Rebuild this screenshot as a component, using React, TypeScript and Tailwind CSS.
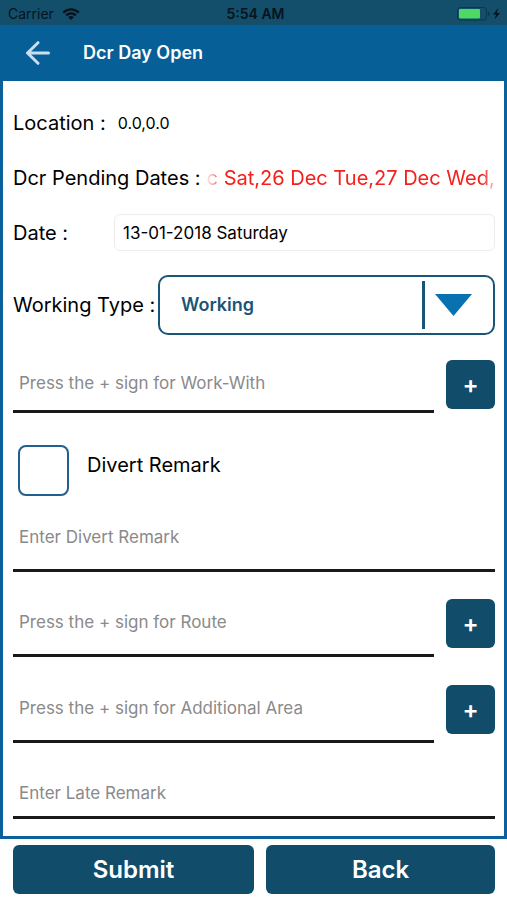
import { useState } from "react";

function StatusBar() {
  return (
    <div className="grid h-[25px] grid-cols-3 items-center bg-[#134e6b] pl-2 pr-1 pt-[2px] text-[14px] text-[#06131c]">
      <div className="flex items-center gap-2">
        <span>Carrier</span>
        <svg width="18" height="12" viewBox="0 0 18 12" fill="none" aria-hidden="true">
          <path d="M1.3 4.6C5.6 0.3 12.4 0.3 16.7 4.6" stroke="currentColor" strokeWidth="2.4" />
          <path d="M4.2 7.4C6.9 4.7 11.1 4.7 13.8 7.4" stroke="currentColor" strokeWidth="2.4" />
          <path d="M9 12L6.2 9.2C7.8 7.7 10.2 7.7 11.8 9.2Z" fill="currentColor" />
        </svg>
      </div>
      <div className="text-center font-semibold">5:54 AM</div>
      <svg className="justify-self-end" width="46" height="14" viewBox="0 0 46 14" aria-hidden="true">
        <rect x="0.5" y="0.5" width="29" height="12.5" rx="3" fill="#134e6b" stroke="#0b3550" />
        <rect x="2" y="2" width="21" height="9.5" rx="1" fill="#4cd964" />
        <path d="M31 4.5C33 5.4 33 8.2 31 9Z" fill="#0b3550" />
        <path d="M41.5 1L36 7.6H39.2L37.5 12.6L43 6H39.8Z" fill="#06131c" />
      </svg>
    </div>
  );
}

function Header() {
  return (
    <header className="flex h-14 items-center bg-[#075f97] pl-[25px]">
      <button type="button" aria-label="Go back" className="text-[#c9def0]">
        <svg width="26" height="24" viewBox="0 0 26 24" fill="none" stroke="currentColor" strokeWidth="3" strokeLinecap="round" strokeLinejoin="round" aria-hidden="true">
          <path d="M23.5 12H2.5M13 1.7L2.5 12L13 22.3" />
        </svg>
      </button>
      <h1 className="ml-8 text-lg font-semibold text-white">Dcr Day Open</h1>
    </header>
  );
}

function LineField({ label, compact = false, addable = false, className = "" }: { label: string; compact?: boolean; addable?: boolean; className?: string }) {
  const space = compact ? (addable ? "pb-[4px]" : "") : "pb-[9px]";
  return (
    <div className={`flex items-start gap-3 ${className}`}>
      <div className={`min-w-0 flex-1 border-b-3 border-black/90 ${space}`}>
        <input
          type="text"
          aria-label={label}
          placeholder={label}
          className="block h-[46px] w-full bg-transparent pl-[6px] text-[17px] text-black outline-none placeholder:text-[#8a8a8a]"
        />
      </div>
      {addable && (
        <button type="button" aria-label={`Add: ${label}`} className="h-[49px] w-[49px] shrink-0 rounded-md bg-[#114d6b] text-2xl font-semibold text-white">
          +
        </button>
      )}
    </div>
  );
}

export default function App() {
  const [date, setDate] = useState("13-01-2018 Saturday");
  const [divert, setDivert] = useState(false);

  return (
    <div className="min-h-[900px] bg-white font-['Inter','Liberation_Sans',sans-serif] text-black">
      <StatusBar />
      <Header />
      <main className="border-x-3 border-b-3 border-[#0a619b] pb-[17px] pl-[10px] pr-[9px] pt-[14px]">
        <div className="flex h-[55px] items-center gap-3">
          <span className="text-xl">Location :</span>
          <span className="text-base">0.0,0.0</span>
        </div>

        <div className="flex h-[55px] items-center gap-[6px]">
          <span className="shrink-0 text-xl">Dcr Pending Dates :</span>
          <div className="min-w-0 flex-1 overflow-hidden whitespace-nowrap text-xl text-[#f5201c] [mask-image:linear-gradient(to_right,rgb(0_0_0/0.1),black_18px,black_calc(100%-12px),rgb(0_0_0/0.2))]">
            c Sat,26 Dec Tue,27 Dec Wed,
          </div>
        </div>

        <div className="flex h-[55px] items-center">
          <label htmlFor="date" className="w-[101px] shrink-0 text-xl">Date :</label>
          <input
            id="date"
            type="text"
            value={date}
            onChange={(e) => setDate(e.target.value)}
            className="h-[37px] min-w-0 flex-1 rounded-md border border-[#ececec] pl-2 text-[17px] outline-none"
          />
        </div>

        <div className="mt-[15px] flex items-center">
          <label htmlFor="working-type" className="w-[145px] shrink-0 whitespace-nowrap text-xl">Working Type :</label>
          <div className="relative min-w-0 flex-1">
            <select
              id="working-type"
              className="block h-[60px] w-full appearance-none rounded-[10px] border-2 border-[#1a5577] bg-white pl-[21px] pr-20 text-lg font-semibold text-[#1a5577] outline-none"
            >
              <option>Working</option>
            </select>
            <div className="pointer-events-none absolute inset-y-[6px] right-[23px] flex gap-[10px]">
              <div className="w-[3px] bg-[#1a5577]" />
              <svg className="mt-[13px]" width="37" height="22" viewBox="0 0 37 22" aria-hidden="true">
                <path d="M0 0H37L18.5 22Z" fill="#0871af" />
              </svg>
            </div>
          </div>
        </div>

        <LineField label="Press the + sign for Work-With" addable compact className="mt-[25px]" />

        <div className="ml-[5px] mt-8 flex items-start gap-[18px]">
          <input
            id="divert"
            type="checkbox"
            checked={divert}
            onChange={(e) => setDivert(e.target.checked)}
            className="h-[51px] w-[51px] shrink-0 appearance-none rounded-lg border-2 border-[#215f8d] bg-white checked:bg-[#215f8d]"
          />
          <label htmlFor="divert" className="text-xl leading-10">Divert Remark</label>
        </div>

        <LineField label="Enter Divert Remark" className="mt-[18px]" />
        <LineField label="Press the + sign for Route" addable className="mt-[27px]" />
        <LineField label="Press the + sign for Additional Area" addable className="mt-[28px]" />
        <LineField label="Enter Late Remark" compact className="mt-[27px]" />
      </main>

      <footer className="flex gap-3 pb-[6px] pl-[13px] pr-3 pt-[6px]">
        <button type="button" className="h-[49px] flex-[241] rounded-md bg-[#114d6b] text-2xl font-semibold text-white">Submit</button>
        <button type="button" className="h-[49px] flex-[229] rounded-md bg-[#114d6b] text-2xl font-semibold text-white">Back</button>
      </footer>
    </div>
  );
}
